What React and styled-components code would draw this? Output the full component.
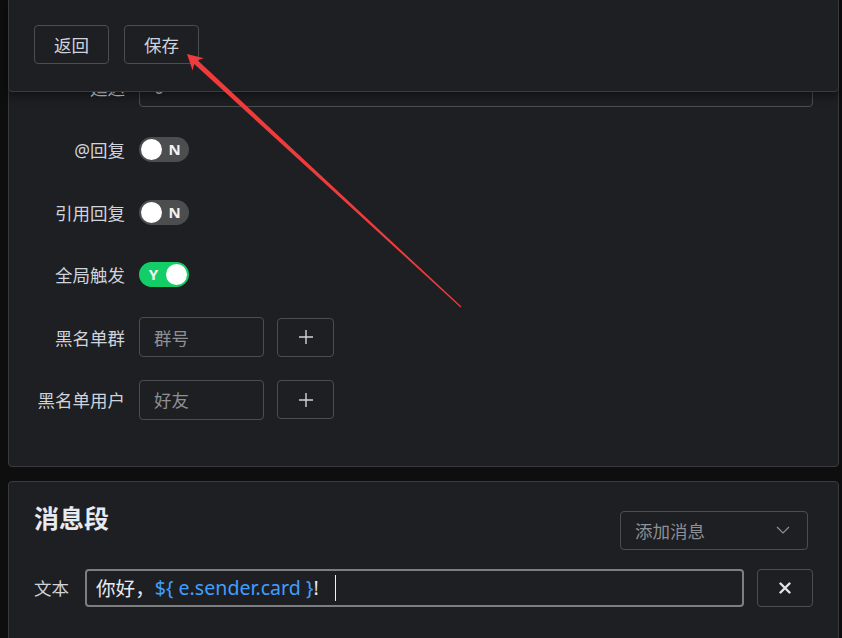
import React from "react";
import styled, { createGlobalStyle } from "styled-components";

const GlobalStyle = createGlobalStyle`
  html, body { margin: 0; padding: 0; background: #0e0e0f; overflow: hidden; }
  body { font-family: "Noto Sans", "Noto Sans CJK SC", sans-serif; }
  * { box-sizing: border-box; }
`;

const Page = styled.div`
  position: relative;
  width: 842px;
  height: 638px;
  overflow: hidden;
  padding: 43px 3px 0 8px;
  display: flex;
  flex-direction: column;
  gap: 14px;
`;

const Panel = styled.section`
  background: #1e1f22;
  border: 1px solid #3a3b3e;
  border-radius: 4px;
  padding: ${(p) => p.$pad};
  flex-shrink: 0;
`;

const Toolbar = styled.div`
  position: absolute;
  top: -4px;
  left: 8px;
  right: 3px;
  height: 96px;
  background: #1e1f22;
  border: 1px solid #3a3b3e;
  border-radius: 4px;
  box-shadow: 0 4px 10px rgba(0, 0, 0, 0.45);
  display: flex;
  align-items: flex-start;
  gap: 15px;
  padding: 28px 25px 0;
  z-index: 2;
`;

const Button = styled.button`
  height: ${(p) => p.$h || "39px"};
  width: ${(p) => p.$w || "auto"};
  padding: 0 19px;
  background: transparent;
  border: 1px solid #4c4d4f;
  border-radius: 4px;
  color: #cfd3dc;
  font-family: inherit;
  font-size: 17.5px;
  display: flex;
  align-items: center;
  justify-content: center;
  flex-shrink: 0;
`;

const Rows = styled.div`
  display: flex;
  flex-direction: column;
  gap: 22.5px;
`;

const Row = styled.div`
  display: flex;
  align-items: center;
  height: 40px;
  gap: 14px;
`;

const Label = styled.label`
  width: 116px;
  text-align: right;
  color: #cfd3dc;
  font-size: 17.5px;
  flex-shrink: 0;
`;

const Field = styled.div`
  height: 40px;
  width: ${(p) => p.$w || "auto"};
  flex: ${(p) => (p.$grow ? 1 : "none")};
  border: 1px solid #4c4d4f;
  border-radius: 4px;
  padding: 0 14px;
  display: flex;
  align-items: center;
  color: ${(p) => (p.$placeholder ? "#8d9095" : "#cfd3dc")};
  font-size: 17.5px;
`;

const Controls = styled.div`
  display: flex;
  align-items: center;
  gap: 13px;
  flex: 1;
`;

const Track = styled.div`
  width: 50px;
  height: 25px;
  border-radius: 12.5px;
  background: ${(p) => (p.$on ? "#13ce66" : "#4c4d4f")};
  display: flex;
  flex-direction: ${(p) => (p.$on ? "row-reverse" : "row")};
  align-items: center;
  padding: 0 2px;
`;

const Knob = styled.span`
  width: 21px;
  height: 21px;
  border-radius: 50%;
  background: #fff;
  flex-shrink: 0;
`;

const TrackText = styled.span`
  flex: 1;
  text-align: center;
  color: #f2f2f2;
  font-weight: 700;
  font-size: 15px;
  font-family: "Noto Sans", sans-serif;
  line-height: 1;
`;

const Header = styled.div`
  display: flex;
  justify-content: space-between;
  align-items: flex-start;
  padding-top: 21px;
`;

const Title = styled.h2`
  margin: 0;
  font-size: 25px;
  line-height: 30px;
  font-weight: 700;
  color: #e5eaf3;
`;

const Select = styled.div`
  margin-top: 8px;
  margin-right: 5px;
  width: 188px;
  height: 39px;
  border: 1px solid #4c4d4f;
  border-radius: 4px;
  padding: 0 17px 0 14px;
  display: flex;
  align-items: center;
  justify-content: space-between;
  color: #8d9095;
  font-size: 17.5px;
`;

const MsgRow = styled.div`
  display: flex;
  align-items: center;
  margin-top: 19px;
  gap: 13px;
`;

const MsgLabel = styled.span`
  color: #cfd3dc;
  font-size: 17.5px;
  margin-right: 2px;
  width: 36px;
`;

const TextInput = styled.div`
  flex: 1;
  height: 38px;
  border: 2px solid #7d7e80;
  border-radius: 4px;
  padding: 0 9px;
  display: flex;
  align-items: center;
  font-size: 19.6px;
  color: #e5eaf3;
  white-space: pre;
`;

const Token = styled.span`
  color: #409eff;
`;

const Caret = styled.span`
  display: inline-block;
  width: 1.5px;
  height: 26px;
  background: #f0f0f0;
  margin-left: 16px;
`;

const Overlay = styled.svg`
  position: absolute;
  left: 0;
  top: 0;
  pointer-events: none;
  z-index: 3;
`;

function Toggle({ on }) {
  return (
    <Track $on={on}>
      <Knob />
      <TrackText>{on ? "Y" : "N"}</TrackText>
    </Track>
  );
}

function Plus() {
  return (
    <svg width="16" height="16" viewBox="0 0 16 16">
      <path d="M8 1v14M1 8h14" stroke="#cfd3dc" strokeWidth="1.4" />
    </svg>
  );
}

function Chevron() {
  return (
    <svg width="14" height="8" viewBox="0 0 14 8">
      <path d="M1 1l6 6 6-6" fill="none" stroke="#8d9095" strokeWidth="1.2" />
    </svg>
  );
}

function Close() {
  return (
    <svg width="12" height="12" viewBox="0 0 12 12">
      <path d="M1.5 1.5l9 9M10.5 1.5l-9 9" stroke="#e0e3ea" strokeWidth="2.4" strokeLinecap="round" />
    </svg>
  );
}

export default function App() {
  return (
    <>
      <GlobalStyle />
      <Page>
        <Toolbar>
          <Button $w="75px">返回</Button>
          <Button $w="75px">保存</Button>
        </Toolbar>

        <Panel $pad="23px 25px 46px 0">
          <Rows>
            <Row>
              <Label>延迟</Label>
              <Field $grow>0</Field>
            </Row>
            <Row>
              <Label>@回复</Label>
              <Toggle on={false} />
            </Row>
            <Row>
              <Label>引用回复</Label>
              <Toggle on={false} />
            </Row>
            <Row>
              <Label>全局触发</Label>
              <Toggle on />
            </Row>
            <Row>
              <Label>黑名单群</Label>
              <Controls>
                <Field $w="125px" $placeholder>群号</Field>
                <Button $w="57px"><Plus /></Button>
              </Controls>
            </Row>
            <Row>
              <Label>黑名单用户</Label>
              <Controls>
                <Field $w="125px" $placeholder>好友</Field>
                <Button $w="57px"><Plus /></Button>
              </Controls>
            </Row>
          </Rows>
        </Panel>

        <Panel $pad="0 25px 40px 25px">
          <Header>
            <Title>消息段</Title>
            <Select>
              <span>添加消息</span>
              <Chevron />
            </Select>
          </Header>
          <MsgRow>
            <MsgLabel>文本</MsgLabel>
            <TextInput>
              你好，<Token>{"${ e.sender.card }"}</Token>!<Caret />
            </TextInput>
            <Button $w="56px" $h="38px"><Close /></Button>
          </MsgRow>
        </Panel>

        <Overlay width="842" height="638" viewBox="0 0 842 638">
          <polygon
            points="187,54 192.6,70.6 194.2,64 460.6,307.4 461.4,306.6 197.6,60.2 203.8,58.2"
            fill="#ef3b3b"
          />
        </Overlay>
      </Page>
    </>
  );
}
